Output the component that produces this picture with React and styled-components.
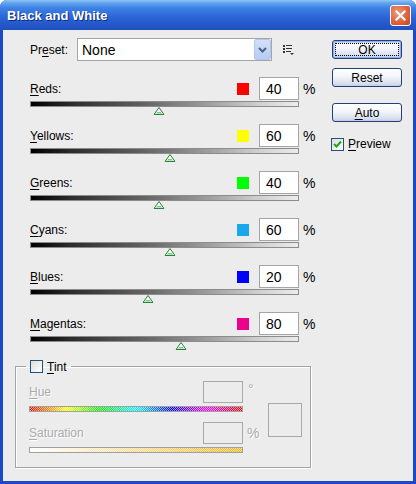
import React from "react";
import styled, { createGlobalStyle } from "styled-components";

const GlobalStyle = createGlobalStyle`
  html, body { margin: 0; padding: 0; background: #fff; }
  body {
    font-family: "Liberation Sans", Arial, sans-serif;
    font-size: 12px;
    color: #000;
  }
  * { box-sizing: border-box; }
`;

const Window = styled.div`
  width: 416px;
  height: 484px;
  display: flex;
  flex-direction: column;
  background: #1d48c8;
  border-radius: 7px 7px 0 0;
  overflow: hidden;
`;

const TitleBar = styled.div`
  height: 30px;
  flex: none;
  display: flex;
  align-items: center;
  justify-content: space-between;
  padding: 0 5px 0 7px;
  background: linear-gradient(
    to bottom,
    #94c6f8 0px,
    #62a3ee 3px,
    #3f82e6 8px,
    #2d68d8 16px,
    #2558ca 24px,
    #2150c0 30px
  );
`;

const Title = styled.span`
  font-family: "Liberation Sans", Arial, sans-serif;
  font-weight: bold;
  font-size: 13px;
  color: #fff;
  text-shadow: 1px 1px 0 #0f2a78;
`;

const CloseButton = styled.button`
  width: 21px;
  height: 21px;
  padding: 0;
  border: 1px solid #fff;
  border-radius: 3px;
  background: radial-gradient(circle at 35% 35%, #ee9a7c 0%, #e0633c 55%, #c8431c 100%);
  display: flex;
  align-items: center;
  justify-content: center;
`;

const Body = styled.div`
  flex: 1;
  margin: 0 3px 3px;
  background: #ececec;
  padding: 8px 0 0 12px;
  display: flex;
`;

const LeftCol = styled.div`
  width: 297px;
  display: flex;
  flex-direction: column;
`;

const Content = styled.div`
  padding-left: 15px;
`;

const PresetRow = styled.div`
  height: 23px;
  display: flex;
  align-items: center;
`;

const Label = styled.span`
  flex: ${(p) => (p.$grow ? 1 : "none")};
  width: ${(p) => p.$w || "auto"};
  font-size: 12px;
  color: ${(p) => (p.$disabled ? "#ababab" : "#000")};
  text-shadow: ${(p) => (p.$disabled ? "1px 1px 0 #fff" : "none")};
  u { text-decoration-thickness: 1px; text-underline-offset: 2px; }
`;

const Select = styled.div`
  width: 195px;
  height: 23px;
  border: 1px solid #a5a5a5;
  background: #fff;
  display: flex;
  align-items: center;
  justify-content: space-between;
  padding: 1px 1px 1px 4px;
  font-size: 14px;
`;

const DropButton = styled.div`
  width: 17px;
  height: 21px;
  margin-right: -1px;
  border: 1px solid #b4c6ee;
  border-radius: 2px;
  background: linear-gradient(#d3e0fb, #b6caf3);
  display: flex;
  align-items: center;
  justify-content: center;
`;

const MenuIcon = styled.svg`
  margin-left: 11px;
`;

const Channels = styled.div`
  margin-top: 16px;
`;

const ChannelRow = styled.div`
  height: 47px;
`;

const RowHead = styled.div`
  width: 285px;
  height: 23px;
  display: flex;
  align-items: center;
`;

const Swatch = styled.span`
  width: 12px;
  height: 12px;
  margin-right: 10px;
  background: ${(p) => p.$color};
`;

const NumBox = styled.div`
  width: 40px;
  height: ${(p) => p.$h || "23px"};
  border: 1px solid ${(p) => (p.$disabled ? "#a9a9a9" : "#a5a5a5")};
  background: ${(p) => (p.$disabled ? "transparent" : "#fff")};
  font-size: 14px;
  padding-left: 6px;
  display: flex;
  align-items: center;
`;

const Unit = styled.span`
  width: ${(p) => p.$w || "16px"};
  padding-left: ${(p) => p.$pl || "4px"};
  font-size: 14px;
  color: ${(p) => (p.$disabled ? "#ababab" : "#000")};
  text-shadow: ${(p) => (p.$disabled ? "1px 1px 0 #fff" : "none")};
  align-self: ${(p) => (p.$top ? "flex-start" : "center")};
  line-height: ${(p) => (p.$top ? "16px" : "normal")};
`;

const Track = styled.div`
  position: relative;
  width: 269px;
  height: 6px;
  margin-top: 1px;
  border: 1px solid #8c8c8c;
  background: linear-gradient(to right, #000 0%, #2c2c2c 15%, #5e5e5e 40%, #9a9a9a 65%, #cfcfcf 85%, #ececec 100%);
`;

const Thumb = styled.svg`
  position: absolute;
  top: 5px;
  transform: translateX(-50%);
`;

const GroupBox = styled.fieldset`
  margin: 1px 0 0;
  padding: 8px 0 0 13px;
  width: 296px;
  height: 108px;
  border: 1px solid #a3a3a3;
  box-shadow: 1px 1px 0 #fff, inset 1px 1px 0 #fff;
`;

const Legend = styled.legend`
  margin-left: -3px;
  padding: 0 4px;
  display: flex;
  align-items: center;
  height: 13px;
`;

const CheckBox = styled.span`
  width: 13px;
  height: 13px;
  margin-right: 4px;
  border: 1px solid #1c5180;
  background: linear-gradient(135deg, #dcdcd7, #fff);
  display: inline-flex;
  align-items: center;
  justify-content: center;
`;

const GroupInner = styled.div`
  display: flex;
  align-items: center;
`;

const Fields = styled.div`
  width: 230px;
`;

const FieldRow = styled.div`
  display: flex;
  height: 22px;
  align-items: center;
  margin-top: ${(p) => p.$mt || "0"};
`;

const Bar = styled.div`
  width: 214px;
  height: 6px;
  margin-top: 3px;
  border: 1px solid #a0a0a0;
  background-image:
    conic-gradient(rgba(255,255,255,0.6) 25%, transparent 0 50%, rgba(255,255,255,0.6) 0 75%, transparent 0),
    ${(p) => p.$gradient};
  background-size: 2px 2px, 100% 100%;
`;

const ColorBox = styled.div`
  width: 34px;
  height: 34px;
  margin: 6px 0 0 9px;
  border: 1px solid #a9a9a9;
`;

const RightCol = styled.div`
  margin-left: 20px;
  padding-top: 2px;
  display: flex;
  flex-direction: column;
`;

const Button = styled.button`
  width: 70px;
  height: 19px;
  margin-bottom: ${(p) => p.$mb || "0"};
  padding: 0;
  border: 1px solid #23407c;
  border-radius: 3px;
  font-family: "Liberation Sans", Arial, sans-serif;
  font-size: 12px;
  color: #000;
  background: linear-gradient(#ffffff 0%, #f3f5fa 45%, #d7dfee 85%, #c3cde3 100%);
  box-shadow: ${(p) => (p.$default ? "inset 0 0 0 1px #8fb0ea, inset 0 0 0 2px #c6d6f4" : "none")};
  outline: ${(p) => (p.$default ? "1px dotted #000" : "none")};
  outline-offset: -4px;
  u { text-underline-offset: 2px; }
`;

const PreviewRow = styled.label`
  display: flex;
  align-items: center;
  margin-left: -1px;
  font-size: 12px;
  u { text-underline-offset: 2px; }
`;

const channels = [
  { key: "R", rest: "eds:", color: "#ff0000", value: 40 },
  { key: "Y", rest: "ellows:", color: "#ffff00", value: 60 },
  { key: "G", rest: "reens:", color: "#00ff00", value: 40 },
  { key: "C", rest: "yans:", color: "#1aa8ec", value: 60 },
  { key: "B", rest: "lues:", color: "#0000ff", value: 20 },
  { key: "M", rest: "agentas:", color: "#ec008c", value: 80 },
];

const hueGradient =
  "linear-gradient(to right, #ff0000, #ffff00 17%, #00ff00 33%, #00ffff 50%, #0000ff 67%, #ff00ff 83%, #ff0000)";
const satGradient = "linear-gradient(to right, #ffffff, #f3b21a)";

function ThumbIcon({ pos }) {
  return (
    <Thumb width="11" height="8" viewBox="0 0 11 8" style={{ left: `${pos}%` }}>
      <polygon points="5.5,0.5 10.5,7.5 0.5,7.5" fill="#f4fbf5" stroke="#2f7d3c" strokeWidth="1" />
      <polygon points="2.5,6.5 8.5,6.5 7.3,5 3.7,5" fill="#6fcf80" />
    </Thumb>
  );
}

export default function App() {
  return (
    <>
      <GlobalStyle />
      <Window>
        <TitleBar>
          <Title>Black and White</Title>
          <CloseButton>
            <svg width="11" height="11" viewBox="0 0 11 11">
              <path d="M1.5 1.5 L9.5 9.5 M9.5 1.5 L1.5 9.5" stroke="#fff" strokeWidth="2.2" strokeLinecap="square" />
            </svg>
          </CloseButton>
        </TitleBar>
        <Body>
          <LeftCol>
            <Content>
              <PresetRow>
                <Label $w="47px">
                  Pr<u>e</u>set:
                </Label>
                <Select>
                  <span>None</span>
                  <DropButton>
                    <svg width="9" height="6" viewBox="0 0 9 6">
                      <path d="M1 1 L4.5 4.5 L8 1" fill="none" stroke="#4d6185" strokeWidth="2" />
                    </svg>
                  </DropButton>
                </Select>
                <MenuIcon width="11" height="10" viewBox="0 0 11 10">
                  <rect x="0" y="0" width="2" height="2" fill="#333" />
                  <rect x="3" y="0" width="6" height="1" fill="#333" />
                  <rect x="0" y="3" width="2" height="2" fill="#333" />
                  <rect x="3" y="3" width="6" height="1" fill="#333" />
                  <rect x="0" y="6" width="2" height="2" fill="#333" />
                  <rect x="3" y="6" width="5" height="1" fill="#333" />
                  <polygon points="7,8 11,8 9,10" fill="#333" />
                </MenuIcon>
              </PresetRow>
              <Channels>
                {channels.map((c) => (
                  <ChannelRow key={c.key}>
                    <RowHead>
                      <Label $grow>
                        <u>{c.key}</u>
                        {c.rest}
                      </Label>
                      <Swatch $color={c.color} />
                      <NumBox>{c.value}</NumBox>
                      <Unit>%</Unit>
                    </RowHead>
                    <Track>
                      <ThumbIcon pos={((c.value + 200) / 500) * 100} />
                    </Track>
                  </ChannelRow>
                ))}
              </Channels>
            </Content>
            <GroupBox>
              <Legend>
                <CheckBox />
                <Label>
                  <u>T</u>int
                </Label>
              </Legend>
              <GroupInner>
                <Fields>
                  <FieldRow>
                    <Label $grow $disabled>
                      <u>H</u>ue
                    </Label>
                    <NumBox $disabled $h="22px" />
                    <Unit $disabled $top $pl="5px">
                      °
                    </Unit>
                  </FieldRow>
                  <Bar $gradient={hueGradient} />
                  <FieldRow $mt="10px">
                    <Label $grow $disabled>
                      <u>S</u>aturation
                    </Label>
                    <NumBox $disabled $h="22px" />
                    <Unit $disabled>%</Unit>
                  </FieldRow>
                  <Bar $gradient={satGradient} />
                </Fields>
                <ColorBox />
              </GroupInner>
            </GroupBox>
          </LeftCol>
          <RightCol>
            <Button $default $mb="9px">OK</Button>
            <Button $mb="16px">Reset</Button>
            <Button $mb="15px">
              <u>A</u>uto
            </Button>
            <PreviewRow>
              <CheckBox>
                <svg width="9" height="8" viewBox="0 0 9 8">
                  <path d="M1 4 L3.5 6.5 L8 1.5" fill="none" stroke="#21a121" strokeWidth="2" />
                </svg>
              </CheckBox>
              <span>
                <u>P</u>review
              </span>
            </PreviewRow>
          </RightCol>
        </Body>
      </Window>
    </>
  );
}
